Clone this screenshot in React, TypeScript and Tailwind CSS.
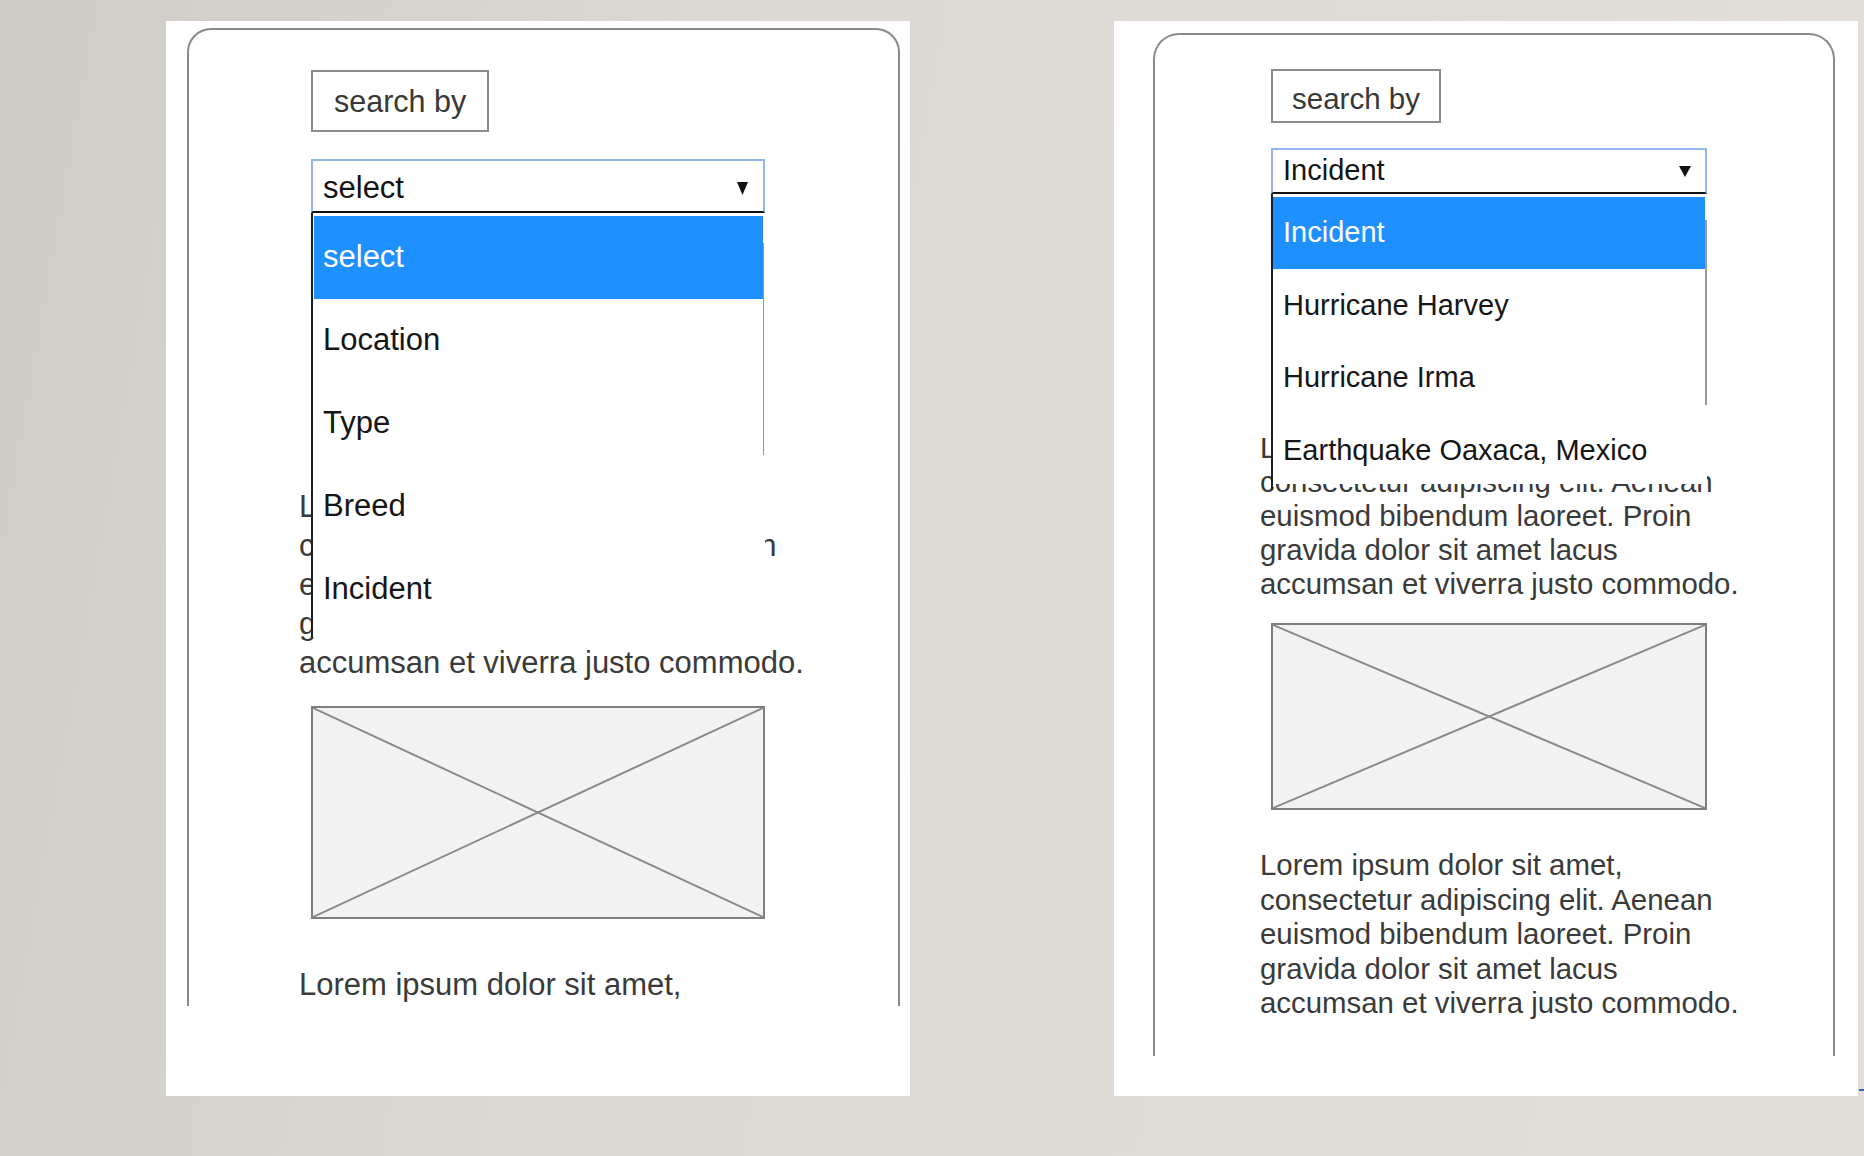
import React from "react";

const FONT = { fontFamily: '"Liberation Sans", Arial, sans-serif' };

function Arrow({ w, h }: { w: number; h: number }) {
  return (
    <svg width={w} height={h} viewBox={`0 0 ${w} ${h}`} className="block">
      <polygon points={`0,0 ${w},0 ${w / 2},${h}`} fill="#111" />
    </svg>
  );
}

function Placeholder({ w, h }: { w: number; h: number }) {
  return (
    <div className="border-2 border-[#7f7f7f] bg-[#f1f2f1]" style={{ width: w, height: h }}>
      <svg width="100%" height="100%" viewBox={`0 0 ${w - 4} ${h - 4}`} preserveAspectRatio="none" className="block">
        <line x1="0" y1="0" x2={w - 4} y2={h - 4} stroke="#8a8a8a" strokeWidth="2" />
        <line x1={w - 4} y1="0" x2="0" y2={h - 4} stroke="#8a8a8a" strokeWidth="2" />
      </svg>
    </div>
  );
}

const LOREM = [
  "Lorem ipsum dolor sit amet,",
  "consectetur adipiscing elit. Aenean",
  "euismod bibendum laoreet. Proin",
  "gravida dolor sit amet lacus",
  "accumsan et viverra justo commodo.",
];

function LeftPanel() {
  const items = ["Location", "Type", "Breed", "Incident"];
  return (
    <div className="w-[744px] h-[1075px] bg-white shrink-0">
      <div className="ml-[21px] mt-[7px] w-[713px] h-[978px] border-2 border-b-0 border-[#8a8a8a] rounded-t-[24px] overflow-hidden">
        <div className="flex flex-col items-start pl-[122px] pt-[40px]">
          <div className="w-[178px] h-[62px] border-2 border-[#8c8c8c] pl-[21px] pt-[7px] text-[30.5px] text-[#383838] leading-normal">
            search by
          </div>
          <div className="relative mt-[27px] w-[454px] h-[54px] border-2 border-[#94b6ef] border-b-[#111] flex items-center justify-between pl-[10px] pr-[15px] pt-[5px]">
            <span className="text-[31px] text-[#141414] leading-normal">select</span>
            <Arrow w={11} h={13} />
            <div className="absolute left-[-2px] top-[52px] w-[454px] h-[424px] bg-white z-10">
              <div className="absolute left-0 top-0 w-[2px] h-full bg-[#1c1c2a]" />
              <div className="absolute right-[1px] top-[30px] w-px h-[212px] bg-[#9a9a9a]" />
              <div className="pt-[3px] pl-[3px] pr-[2px]">
                <div className="h-[83px] bg-[#1e90ff] text-white flex items-center pl-[9px] text-[31px] leading-normal">
                  select
                </div>
                {items.map((t) => (
                  <div key={t} className="h-[83px] flex items-center pl-[9px] text-[31px] text-[#161616] leading-normal">
                    {t}
                  </div>
                ))}
              </div>
            </div>
          </div>
          <div className="mt-[274px] ml-[-12px] text-[31px] leading-[39px] text-[#3a3a3a] whitespace-nowrap">
            {LOREM.map((l) => (
              <div key={l}>{l}</div>
            ))}
          </div>
          <div className="mt-[24px]">
            <Placeholder w={454} h={213} />
          </div>
          <div className="mt-[46px] ml-[-12px] text-[31px] leading-[39px] text-[#3a3a3a] whitespace-nowrap">
            {LOREM.map((l) => (
              <div key={l}>{l}</div>
            ))}
          </div>
        </div>
      </div>
    </div>
  );
}

function RightPanel() {
  const items = ["Hurricane Harvey", "Hurricane Irma", "Earthquake Oaxaca, Mexico"];
  return (
    <div className="w-[744px] h-[1075px] bg-white shrink-0">
      <div className="ml-[39px] mt-[12px] w-[682px] h-[1023px] border-2 border-b-0 border-[#8a8a8a] rounded-t-[26px] overflow-hidden">
        <div className="flex flex-col items-start pl-[116px] pt-[34px]">
          <div className="w-[170px] h-[54px] border-2 border-[#8c8c8c] pl-[19px] pt-[6px] text-[29.5px] text-[#383838] leading-normal">
            search by
          </div>
          <div className="relative mt-[25px] w-[436px] h-[46px] border-2 border-[#94b6ef] border-b-[#111] flex items-center justify-between pl-[10px] pr-[14px]">
            <span className="text-[29px] text-[#141414] leading-normal">Incident</span>
            <Arrow w={12} h={11} />
            <div className="absolute left-[-2px] top-[44px] w-[436px] h-[290px] bg-white z-10">
              <div className="absolute left-0 top-0 w-[2px] h-[296px] bg-[#1c1c2a]" />
              <div className="absolute right-0 top-[26px] w-[2px] h-[185px] bg-[#9a9a9a]" />
              <div className="h-full overflow-hidden pt-[3px] pl-[2px] pr-[2px]">
                <div className="h-[72px] bg-[#1e90ff] text-white flex items-center pl-[10px] text-[29px] leading-normal">
                  Incident
                </div>
                {items.map((t) => (
                  <div key={t} className="h-[72.5px] flex items-center pl-[10px] text-[29px] text-[#161616] leading-normal whitespace-nowrap">
                    {t}
                  </div>
                ))}
              </div>
            </div>
          </div>
          <div className="mt-[237px] ml-[-11px] text-[29.4px] leading-[34px] text-[#3a3a3a] whitespace-nowrap">
            {LOREM.map((l) => (
              <div key={l}>{l}</div>
            ))}
          </div>
          <div className="mt-[22px]">
            <Placeholder w={436} h={187} />
          </div>
          <div className="mt-[38px] ml-[-11px] text-[29.4px] leading-[34.5px] text-[#3a3a3a] whitespace-nowrap">
            {LOREM.map((l) => (
              <div key={l}>{l}</div>
            ))}
          </div>
        </div>
      </div>
    </div>
  );
}

export default function App() {
  return (
    <div
      className="relative w-[1864px] h-[1156px] overflow-hidden bg-[linear-gradient(100deg,#cfcbc6_0%,#dcd9d4_35%,#e2dfda_100%)]"
      style={FONT}
    >
      <div className="flex items-start pl-[166px] pt-[21px] gap-[204px]">
        <LeftPanel />
        <RightPanel />
      </div>
      <div className="absolute left-[1859px] top-[1089px] w-[5px] h-[2px] bg-[#3b64a8]" />
    </div>
  );
}
